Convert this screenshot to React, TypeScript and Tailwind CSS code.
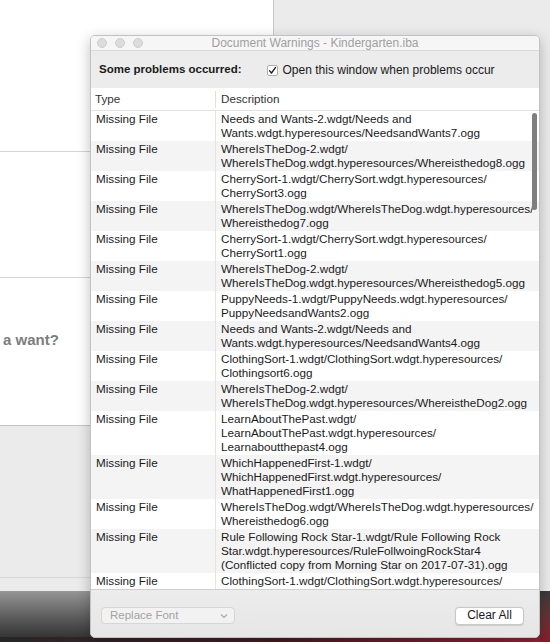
import React from "react";

const rows: string[][] = [
  ["Needs and Wants-2.wdgt/Needs and", "Wants.wdgt.hyperesources/NeedsandWants7.ogg"],
  ["WhereIsTheDog-2.wdgt/", "WhereIsTheDog.wdgt.hyperesources/Whereisthedog8.ogg"],
  ["CherrySort-1.wdgt/CherrySort.wdgt.hyperesources/", "CherrySort3.ogg"],
  ["WhereIsTheDog.wdgt/WhereIsTheDog.wdgt.hyperesources/", "Whereisthedog7.ogg"],
  ["CherrySort-1.wdgt/CherrySort.wdgt.hyperesources/", "CherrySort1.ogg"],
  ["WhereIsTheDog-2.wdgt/", "WhereIsTheDog.wdgt.hyperesources/Whereisthedog5.ogg"],
  ["PuppyNeeds-1.wdgt/PuppyNeeds.wdgt.hyperesources/", "PuppyNeedsandWants2.ogg"],
  ["Needs and Wants-2.wdgt/Needs and", "Wants.wdgt.hyperesources/NeedsandWants4.ogg"],
  ["ClothingSort-1.wdgt/ClothingSort.wdgt.hyperesources/", "Clothingsort6.ogg"],
  ["WhereIsTheDog-2.wdgt/", "WhereIsTheDog.wdgt.hyperesources/WhereistheDog2.ogg"],
  ["LearnAboutThePast.wdgt/", "LearnAboutThePast.wdgt.hyperesources/", "Learnaboutthepast4.ogg"],
  ["WhichHappenedFirst-1.wdgt/", "WhichHappenedFirst.wdgt.hyperesources/", "WhatHappenedFirst1.ogg"],
  ["WhereIsTheDog.wdgt/WhereIsTheDog.wdgt.hyperesources/", "Whereisthedog6.ogg"],
  [
    "Rule Following Rock Star-1.wdgt/Rule Following Rock",
    "Star.wdgt.hyperesources/RuleFollwoingRockStar4",
    "(Conflicted copy from Morning Star on 2017-07-31).ogg",
  ],
  ["ClothingSort-1.wdgt/ClothingSort.wdgt.hyperesources/"],
];

export default function App() {
  return (
    <div className="relative w-[550px] h-[642px] overflow-hidden bg-[#ebebeb] font-['Liberation_Sans',Arial,sans-serif] text-[12px] text-[#1a1a1a]">
      {/* desktop: white document panel behind */}
      <div className="absolute left-0 top-0 w-[274px] h-[426px] bg-white border-r border-b border-r-[#c9c9c9] border-b-[#c4c4c4]" />
      <div className="absolute left-0 top-[151px] w-[273px] h-px bg-[#d4d4d4]" />
      <div className="absolute left-0 top-[277px] w-[273px] h-px bg-[#d4d4d4]" />
      <div className="absolute left-[3px] top-[331px] text-[15px] font-bold text-[#7d7d7d] leading-[18px]">a want?</div>
      <div className="absolute left-0 top-[577px] w-[100px] h-px bg-[#d8d8d8]" />
      {/* desktop: wallpaper strip at bottom */}
      <div className="absolute left-0 top-[591px] w-[550px] h-[51px] bg-gradient-to-b from-[#969696] via-[#5e5e5e] to-[#2c2c2c]" />
      <div className="absolute left-0 top-[637px] w-[550px] h-[5px] bg-gradient-to-r from-[#262626] via-[#4a1a22] to-[#a01e36]" />
      <div className="absolute left-[540px] top-[591px] w-[10px] h-[51px] bg-gradient-to-b from-[#3a3a3a] to-[#8a1a2a]" />

      {/* dialog window */}
      <div className="absolute left-[90px] top-[35px] w-[450px] h-[603px] rounded-[5px] bg-[#ececec] border border-[#c2c2c2] shadow-[0_4px_14px_rgba(0,0,0,0.25)] overflow-hidden flex flex-col">
        {/* title bar */}
        <div className="relative h-[15px] shrink-0 bg-[#f6f6f6] border-b border-[#d9d9d9] flex items-center">
          <div className="flex items-center gap-[8px] pl-[6px]">
            <span className="w-[10px] h-[10px] rounded-full bg-[#dcdcdc] border border-[#cecece]" />
            <span className="w-[10px] h-[10px] rounded-full bg-[#dcdcdc] border border-[#cecece]" />
            <span className="w-[10px] h-[10px] rounded-full bg-[#dcdcdc] border border-[#cecece]" />
          </div>
          <div className="absolute inset-0 flex items-center justify-center text-[12px] leading-[15px] text-[#9f9f9f]">
            Document Warnings - Kindergarten.iba
          </div>
        </div>

        {/* message header */}
        <div className="h-[37px] shrink-0 flex items-center pl-[8px] pt-[1px]">
          <span className="font-bold text-[11.5px] text-[#1a1a1a]">Some problems occurred:</span>
          <label className="ml-[25px] flex items-center gap-[5px]">
            <span className="w-[11px] h-[11px] rounded-[2px] bg-white border border-[#b0b0b0] flex items-center justify-center">
              <svg width="9" height="9" viewBox="0 0 9 9">
                <path d="M1.6 4.8 L3.5 7 L7.6 1.4" fill="none" stroke="#1a1a1a" strokeWidth="1.3" strokeLinecap="round" strokeLinejoin="round" />
              </svg>
            </span>
            <span className="text-[12px] text-[#1a1a1a]">Open this window when problems occur</span>
          </label>
        </div>

        {/* table */}
        <div className="relative flex-1 min-h-0 bg-white overflow-hidden flex flex-col text-[11.7px]">
          <div className="h-[23px] shrink-0 flex items-center border-b border-[#e2e2e2] text-[#333]">
            <div className="w-[125px] pl-[4px] h-[17px] flex items-center border-r border-[#e0e0e0]">Type</div>
            <div className="pl-[5px]">Description</div>
          </div>
          <div className="flex flex-col">
            {rows.map((lines, i) => (
              <div key={i} className={`flex py-[1px] ${i % 2 === 1 ? "bg-[#f4f4f4]" : "bg-white"}`}>
                <div className="w-[125px] shrink-0 pl-[5px] leading-[14px] border-r border-[#e4e4e4] -my-[1px] py-[1px]">Missing File</div>
                <div className="pl-[5px] leading-[14px] whitespace-nowrap">
                  {lines.map((l, j) => (
                    <div key={j}>{l}</div>
                  ))}
                </div>
              </div>
            ))}
          </div>
          {/* overlay scrollbar */}
          <div className="absolute right-[2px] top-[25px] w-[5px] h-[97px] rounded-full bg-[#7f7f7f]" />
        </div>

        {/* footer */}
        <div className="h-[48px] shrink-0 border-t border-[#d0d0d0] bg-gradient-to-b from-[#ececec] to-[#e6e6e6] flex items-center justify-between pl-[10px] pr-[15px] pt-[4px]">
          <div className="w-[134px] h-[17px] rounded-[4px] border border-[#d6d6d6] bg-[#f2f2f2] flex items-center justify-between pl-[8px] pr-[6px] text-[#a2a2a2]">
            <span className="text-[11.5px] leading-[15px]">Replace Font</span>
            <svg width="8" height="6" viewBox="0 0 8 6">
              <path d="M1 1.5 L4 4.5 L7 1.5" fill="none" stroke="#a8a8a8" strokeWidth="1.2" />
            </svg>
          </div>
          <div className="w-[69px] h-[18px] rounded-[4px] border border-[#c8c8c8] bg-white shadow-[0_0.5px_1px_rgba(0,0,0,0.12)] flex items-center justify-center text-[12px] leading-[15px] text-[#1a1a1a]">
            Clear All
          </div>
        </div>
      </div>
    </div>
  );
}
